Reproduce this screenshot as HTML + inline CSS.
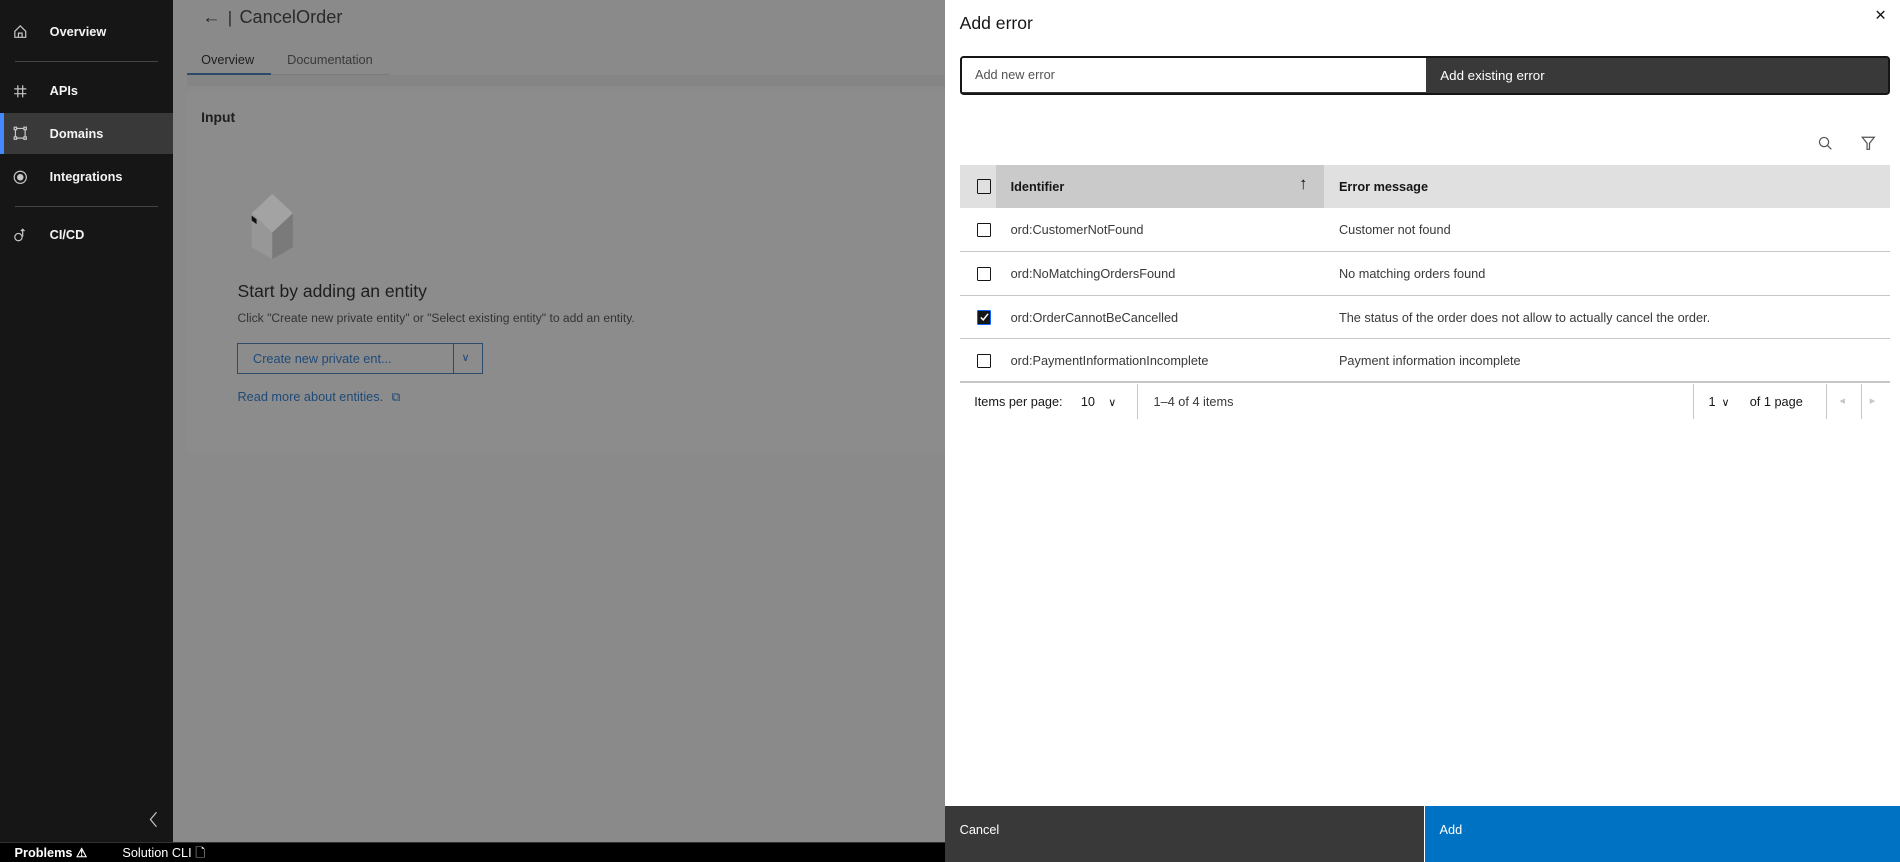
<!DOCTYPE html>
<html><head><meta charset="utf-8"><style>
*{box-sizing:border-box;margin:0;padding:0}
html,body{width:1900px;height:862px;overflow:hidden;background:#fff}
#r{width:1568px;height:711px;position:relative;zoom:1.21173;font-family:"Liberation Sans",sans-serif;color:#161616;font-size:11px}
.a{position:absolute;white-space:nowrap}
.sb{left:0;top:0;width:143px;height:695px;background:#161616}
.ni{position:absolute;left:0;width:143px;height:34px;color:#f4f4f4;font-weight:bold;font-size:10.5px;line-height:34px;padding-left:41px}
.ni svg{position:absolute;left:11px;top:11px}
.sep{position:absolute;left:12px;width:118px;height:1px;background:#444}
.main{left:143px;top:0;width:637px;height:695px;background:#8a8a8a}
.panel{left:780px;top:0;width:788px;height:711px;background:#fff}
.cb{position:absolute;width:12px;height:12px;border:1.3px solid #161616;border-radius:1px}
.row{position:absolute;left:12px;width:768px;height:36px;border-bottom:1px solid #c6c6c6;color:#393939;font-size:10.5px;line-height:36px}
</style></head><body><div id="r">
<div class="a sb">
 <div class="ni" style="top:9px"><svg width="12" height="12" viewBox="0 0 12 12" fill="none" stroke="#c6c6c6"><path d="M1.5 6L6 1.5 10.5 6V11H1.5z M4.5 11V7.5h3V11"/></svg>Overview</div>
 <div class="sep" style="top:50px"></div>
 <div class="ni" style="top:58px"><svg width="12" height="12" viewBox="0 0 12 12" fill="none" stroke="#c6c6c6"><path d="M4 1v10M8 1v10M1 4h10M1 8h10"/></svg>APIs</div>
 <div class="ni" style="top:93px;background:#393939"><div style="position:absolute;left:0;top:0;width:3px;height:34px;background:#4589ff"></div><svg width="12" height="12" viewBox="0 0 12 12" fill="none" stroke="#c6c6c6"><path d="M3 2h6M3 10h6M2 3v6M10 3v6"/><rect x="1" y="1" width="2" height="2"/><rect x="9" y="1" width="2" height="2"/><rect x="1" y="9" width="2" height="2"/><rect x="9" y="9" width="2" height="2"/></svg>Domains</div>
 <div class="ni" style="top:129px"><svg width="12" height="12" viewBox="0 0 12 12" fill="none" stroke="#c6c6c6"><circle cx="6" cy="6" r="5"/><circle cx="6" cy="6" r="2.2" fill="#c6c6c6"/></svg>Integrations</div>
 <div class="sep" style="top:170px"></div>
 <div class="ni" style="top:177px"><svg width="12" height="12" viewBox="0 0 12 12" fill="none" stroke="#c6c6c6"><circle cx="4.5" cy="7.5" r="3"/><path d="M8 1v6M6.5 2.5L8 1l1.5 1.5"/></svg>CI/CD</div>
 <svg class="a" style="left:122px;top:669px" width="10" height="14" viewBox="0 0 10 14" fill="none" stroke="#c6c6c6"><path d="M7 1L2 7l5 6"/></svg>
</div>
<div class="a" style="left:0;top:695px;width:780px;height:16px;background:#000;border-top:1px solid #333;color:#fff;font-size:10.5px;line-height:16px">
 <span class="a" style="left:12px;font-weight:bold">Problems ⚠</span><span class="a" style="left:101px">Solution CLI 🗋</span>
</div>
<div class="a main">
 <div class="a" style="left:24px;top:6px;font-size:15px;color:#2a2a2a">←<span style="margin:0 6px 0 6px;font-size:14px">|</span>CancelOrder</div>
 <div class="a" style="left:23px;top:43px;font-size:10.5px;color:#1e1e1e">Overview</div>
 <div class="a" style="left:94px;top:43px;font-size:10.5px;color:#3a3a3a">Documentation</div>
 <div class="a" style="left:81px;top:61px;width:97px;height:1px;background:#7a7a7a"></div>
 <div class="a" style="left:11px;top:60px;width:70px;height:2px;background:#2c4a6a"></div>
 <div class="a" style="left:11px;top:62px;width:626px;height:9px;background:#858585"></div>
 <div class="a" style="left:11px;top:75px;width:626px;height:299px;background:#8c8c8c"></div>
 <div class="a" style="left:23px;top:90px;font-size:11.5px;font-weight:bold;color:#1e1e1e">Input</div>
 <svg class="a" style="left:57px;top:156px" width="52" height="60" viewBox="0 0 52 60"><path d="M8 20L25 4 42 20 25 36z" fill="#a3a3a3"/><path d="M8 20v28l17 10V36z" fill="#979797"/><path d="M42 20v28L25 58V36z" fill="#7a7a7a"/><path d="M8 22l4 3v4l-4-3z" fill="#111"/></svg>
 <div class="a" style="left:53px;top:232px;font-size:14.5px;color:#1e1e1e">Start by adding an entity</div>
 <div class="a" style="left:53px;top:257px;font-size:10px;color:#333">Click "Create new private entity" or "Select existing entity" to add an entity.</div>
 <div class="a" style="left:53px;top:283px;width:203px;height:26px;border:1px solid #2c4a6a;color:#1f4a78;font-size:10.5px;line-height:24px;padding-left:12px">Create new private ent...<div class="a" style="left:177px;top:0;width:1px;height:24px;background:#2c4a6a"></div><span class="a" style="left:184px;top:0;font-size:9px">∨</span></div>
 <div class="a" style="left:53px;top:321px;font-size:10.5px;color:#1f4a78">Read more about entities. <span style="margin-left:4px">⧉</span></div>
</div>
<div class="a panel">
 <div class="a" style="left:12px;top:11px;font-size:14.5px">Add error</div>
 <div class="a" style="left:767px;top:7px;font-size:12px">✕</div>
 <div class="a" style="left:12px;top:46px;width:768px;height:32px;border:2px solid #161616;border-radius:3px;background:#393939;overflow:hidden">
  <div class="a" style="left:0;top:0;width:383px;height:28px;background:#fff;color:#525252;font-size:10.5px;line-height:28px;padding-left:11px">Add new error</div>
  <div class="a" style="left:395px;top:1px;color:#fff;font-size:11px;line-height:28px">Add existing error</div>
 </div>
 <svg class="a" style="left:720px;top:112px" width="12" height="12" viewBox="0 0 12 12" fill="none" stroke="#525252"><circle cx="5" cy="5" r="3.8"/><path d="M8 8l3 3"/></svg>
 <svg class="a" style="left:756px;top:112px" width="12" height="12" viewBox="0 0 12 12" fill="none" stroke="#525252"><path d="M1 1h10L7 6v5H5V6z"/></svg>
 <div class="a" style="left:12px;top:136px;width:768px;height:36px;background:#e0e0e0"></div>
 <div class="a" style="left:42px;top:136px;width:271px;height:36px;background:#cacaca"></div>
 <div class="cb" style="left:26px;top:148px"></div>
 <div class="a" style="left:54px;top:148px;font-weight:bold;font-size:10.5px">Identifier</div>
 <div class="a" style="left:292px;top:144px;font-size:14px">↑</div>
 <div class="a" style="left:325px;top:148px;font-weight:bold;font-size:10.5px">Error message</div>
 <div class="row" style="top:172px"><div class="cb" style="left:14px;top:12px"></div><span class="a" style="left:42px">ord:CustomerNotFound</span><span class="a" style="left:313px">Customer not found</span></div>
 <div class="row" style="top:208px"><div class="cb" style="left:14px;top:12px"></div><span class="a" style="left:42px">ord:NoMatchingOrdersFound</span><span class="a" style="left:313px">No matching orders found</span></div>
 <div class="row" style="top:244px"><div class="cb" style="left:14px;top:12px;background:#161616;border-color:#0f62fe;border-width:1px"><svg class="a" style="left:1px;top:1px" width="9" height="9" viewBox="0 0 9 9" fill="none" stroke="#fff" stroke-width="1.2"><path d="M1.5 4.5l2 2 4-5"/></svg></div><span class="a" style="left:42px">ord:OrderCannotBeCancelled</span><span class="a" style="left:313px">The status of the order does not allow to actually cancel the order.</span></div>
 <div class="row" style="top:280px;border-bottom:2px solid #c6c6c6"><div class="cb" style="left:14px;top:12px"></div><span class="a" style="left:42px">ord:PaymentInformationIncomplete</span><span class="a" style="left:313px">Payment information incomplete</span></div>
 <div class="a" style="left:24px;top:325px;font-size:10.5px">Items per page:</div>
 <div class="a" style="left:112px;top:325px;font-size:10.5px">10 <span style="margin-left:8px;font-size:9px">∨</span></div>
 <div class="a" style="left:158px;top:317px;width:1px;height:29px;background:#c6c6c6"></div>
 <div class="a" style="left:172px;top:325px;font-size:10.5px;color:#393939">1–4 of 4 items</div>
 <div class="a" style="left:617px;top:317px;width:1px;height:29px;background:#c6c6c6"></div>
 <div class="a" style="left:630px;top:325px;font-size:10.5px">1 <span style="margin-left:2px;font-size:9px">∨</span></div>
 <div class="a" style="left:664px;top:325px;font-size:10.5px">of 1 page</div>
 <div class="a" style="left:727px;top:317px;width:1px;height:29px;background:#c6c6c6"></div>
 <div class="a" style="left:756px;top:317px;width:1px;height:29px;background:#c6c6c6"></div>
 <div class="a" style="left:738px;top:325px;font-size:9px;color:#c6c6c6">◂</div>
 <div class="a" style="left:763px;top:325px;font-size:9px;color:#c6c6c6">▸</div>
 <div class="a" style="left:0;top:665px;width:395px;height:46px;background:#393939;color:#fff;font-size:10.5px;padding:13px 12px">Cancel</div>
 <div class="a" style="left:396px;top:665px;width:392px;height:46px;background:#0072c3;color:#fff;font-size:10.5px;padding:13px 12px">Add</div>
</div>
</div></body></html>
